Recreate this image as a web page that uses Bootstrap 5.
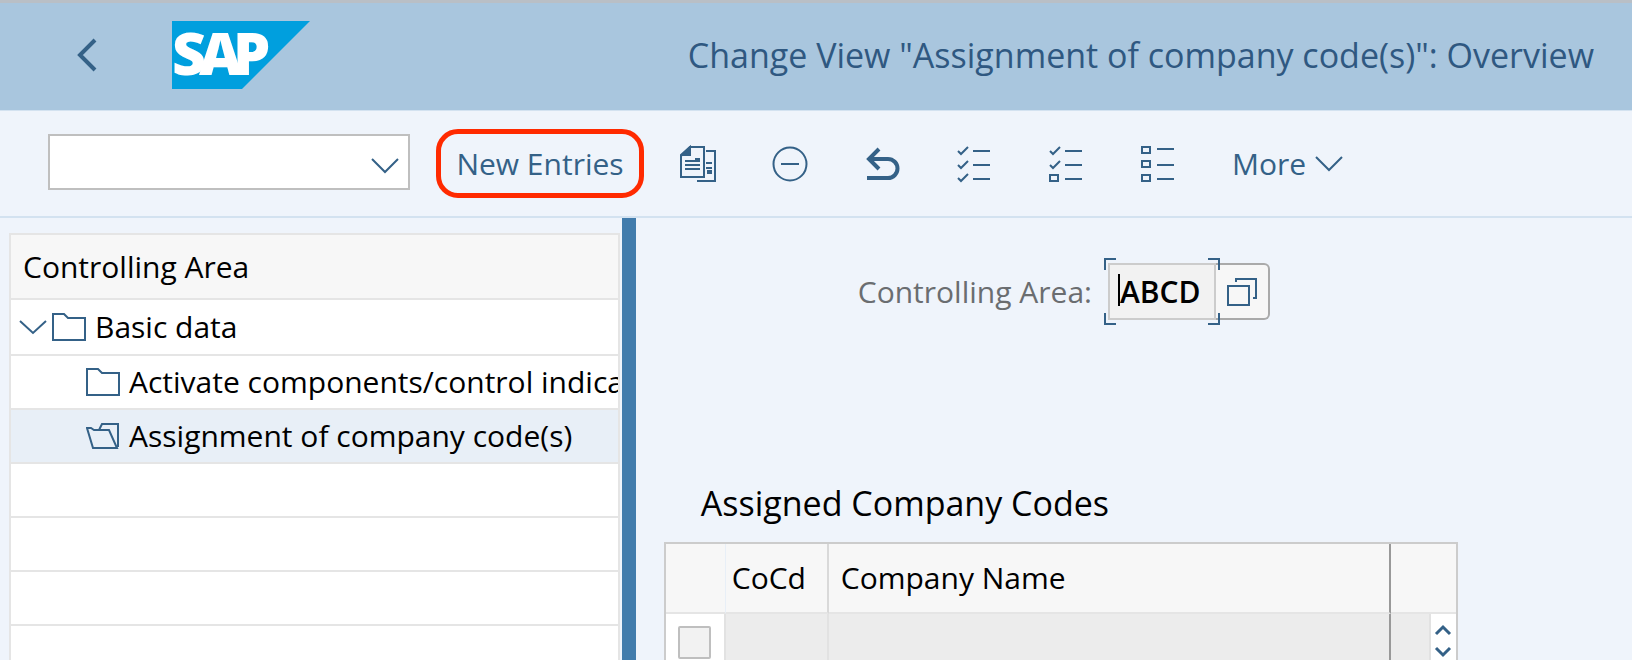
<!DOCTYPE html>
<html lang="en">
<head>
<meta charset="utf-8">
<meta name="viewport" content="width=device-width, initial-scale=1">
<title>Change View "Assignment of company code(s)": Overview</title>
<link href="https://cdn.jsdelivr.net/npm/bootstrap@5.3.0/dist/css/bootstrap.min.css" rel="stylesheet">
<style>
  :root { --ink: #346187; --accent: #427cac; --page: #eff4fb; --line: #e5e5e5; }
  body { font-family: "Open Sans", "Noto Sans", sans-serif; font-size: 30px; line-height: 40px; color: #000; background: var(--page); }
  svg { display: block; flex: none; }
  .ic { fill: none; stroke: var(--ink); stroke-width: 2; }
  .ic.mid { stroke-width: 3; }
  .ic.heavy { stroke-width: 4; }
  .plain-btn { background: none; border: 0; padding: 0; color: var(--ink); }
  .shell-bar { background: #a9c6de; border-top: 3px solid #b9bfc6; height: 110px; padding: 0 38px 4px 76px; }
  .shell-title { font-size: 34px; line-height: 40px; color: #2f5881; font-weight: 500; }
  .shell-home { margin-left: 74px; }
  .shell-logo { font-size: 59px; font-weight: 800; fill: #fff; }
  .tool-bar { height: 108px; border-top: 1px solid #d3e2f0; border-bottom: 2px solid #d3e2f0; padding: 0 48px; }
  .command-box { width: 362px; height: 56px; margin: 0 26px 4px 0; }
  .command-box select { appearance: none; background: #fff; border: 2px solid #bfbfbf; }
  .command-box svg { right: 10px; top: 22px; pointer-events: none; }
  .marked { border: 5px solid #ff2a00; border-radius: 22px; height: 69px; width: 208px; }
  .tools { gap: 56px; margin-left: 36px; }
  .side { width: 38.1%; padding: 15px 2px 0 9px; }
  .tree { background: #fff; border: 2px solid var(--line); border-bottom: 0; }
  .tree-head { height: 65px; background: #f7f7f7; border-bottom: 2px solid var(--line); padding-left: 12px; }
  .tree-row { height: 54px; border-bottom: 2px solid var(--line); gap: 9px; padding-left: 75px; white-space: nowrap; overflow: hidden; font-weight: 500; }
  .tree-row.root { height: 56px; padding-left: 8px; }
  .tree-row.root button { margin-right: -4px; }
  .tree-row.chosen { background: #e8eff7; }
  .splitter { width: 14px; background: var(--accent); }
  .work { padding: 45px 0 0 28px; min-width: 0; }
  .field-row { padding-left: 194px; height: 57px; gap: 16px; }
  .field-row label { color: #6a6d70; }
  .key-field { width: 108px; }
  .key-field input { width: 108px; height: 57px; padding: 0 0 0 10px; background: #f2f2f2; border: 2px solid #ccc; border-radius: 0; font-weight: 600; color: #000; }
  .focus-frame { left: -4px; top: -5px; pointer-events: none; }
  .help-btn { width: 54px; height: 57px; background: #f7f7f7; border: 2px solid #aaa; border-left: 0; border-radius: 0 6px 6px 0; }
  .grid-title { font-size: 34px; line-height: 40px; font-weight: 500; margin: 163px 0 19px 37px; }
  .grid { width: 82%; table-layout: fixed; border: 2px solid #ccc; border-collapse: separate; border-spacing: 0; background: #f7f7f7; }
  .grid th { height: 70px; font-weight: 500; padding: 0 0 0 6px; border-bottom: 2px solid var(--line); border-right: 2px solid #d9d9d9; }
  .grid th.name { padding-left: 12px; }
  .grid td { height: 56px; padding: 0; background: #ececec; border-right: 2px solid #e2e2e2; }
  .grid th.pick { border-right: 1px solid #e8eff7; }
  .grid td.pick { background: #fff; }
  .grid .edge { border-right: 2px solid #999; }
  .grid th.last, .grid td.last { border-right: 0; }
  .grid td.last { background: #fff; }
  .grid input { appearance: none; display: block; width: 33px; height: 33px; margin: 0 0 0 12px; background: #f2f2f2; border: 2px solid #bfbfbf; border-radius: 2px; }
  .grid .w-pick { width: 60px; }
  .grid .w-code { width: 103px; }
  .grid .w-gap { width: 40px; }
  .grid .w-scroll { width: 25px; }
</style>
</head>
<body class="vh-100 overflow-hidden d-flex flex-column">

<header class="shell-bar d-flex align-items-center flex-shrink-0">
  <button class="plain-btn" type="button" aria-label="Back">
    <svg width="22" height="36" viewBox="0 0 22 36" class="ic heavy"><path d="M19 3 4 18 19 33"/></svg>
  </button>
  <a href="#" class="shell-home text-decoration-none" aria-label="SAP home">
    <svg width="138" height="68" viewBox="0 0 138 68"><path d="M0 0H138L70 68H0Z" fill="#009fde"/><text class="shell-logo" x="0 27 61" y="54">SAP</text></svg>
  </a>
  <h1 class="shell-title mb-0 ms-auto">Change View "Assignment of company code(s)": Overview</h1>
</header>

<nav class="tool-bar d-flex align-items-center flex-shrink-0" aria-label="Functions">
  <div class="command-box position-relative">
    <select class="w-100 h-100" aria-label="Command"><option></option></select>
    <svg class="ic position-absolute" width="30" height="18" viewBox="0 0 30 18"><path d="M2 3 15 16 28 3"/></svg>
  </div>
  <button type="button" class="plain-btn marked">New Entries</button>
  <div class="tools d-flex align-items-center">
    <button type="button" class="plain-btn" aria-label="Copy as">
      <svg class="ic" width="36" height="38" viewBox="0 0 36 38"><path d="M10 2H24V32H1V11Z"/><path d="M10 2V10H1Z" fill="#346187"/><path d="M26 6H35V36H17M5 16H15M5 20H20M5 24H20M26 18H32M26 23H32"/><path d="M15 15H20M27 27H32" stroke-width="4"/></svg>
    </button>
    <button type="button" class="plain-btn" aria-label="Delete">
      <svg class="ic" width="36" height="38" viewBox="0 0 36 38"><circle cx="18" cy="19" r="16.5"/><path d="M9 19H27"/></svg>
    </button>
    <button type="button" class="plain-btn" aria-label="Undo change">
      <svg class="ic heavy" width="36" height="38" viewBox="0 0 36 38"><path d="M15 4 5 14 15 24M5 14H24A9 9 0 0 1 24 33H3"/></svg>
    </button>
    <button type="button" class="plain-btn" aria-label="Select all">
      <svg class="ic" width="36" height="38" viewBox="0 0 36 38"><path d="M2 6 5 9 12 2M2 20 5 23 12 16M2 33 5 36 12 29M17 6H34M17 20H34M17 34H34"/></svg>
    </button>
    <button type="button" class="plain-btn" aria-label="Select block">
      <svg class="ic" width="36" height="38" viewBox="0 0 36 38"><path d="M2 6 5 9 12 2M2 20 5 23 12 16M17 6H34M17 20H34M17 34H34M2 30H10V36H2Z"/></svg>
    </button>
    <button type="button" class="plain-btn" aria-label="Deselect all">
      <svg class="ic" width="36" height="38" viewBox="0 0 36 38"><path d="M2 2H10V8H2ZM2 16H10V22H2ZM2 30H10V36H2ZM17 4H34M17 20H34M17 34H34"/></svg>
    </button>
    <button type="button" class="plain-btn d-flex align-items-center gap-2">More
      <svg class="ic" width="30" height="18" viewBox="0 0 30 18"><path d="M2 2 15 15 28 2"/></svg>
    </button>
  </div>
</nav>

<main class="d-flex flex-grow-1 overflow-hidden">
  <aside class="side flex-shrink-0">
    <div class="tree">
      <div class="tree-head d-flex align-items-center">Controlling Area</div>
      <ul class="list-unstyled mb-0">
        <li class="tree-row root d-flex align-items-center">
          <button type="button" class="plain-btn" aria-label="Collapse"><svg class="ic" width="28" height="18" viewBox="0 0 28 18"><path d="M1 3 14 15 27 3"/></svg></button>
          <svg class="ic" width="34" height="28" viewBox="0 0 34 28"><path d="M1 1H12L16 5H33V27H1Z"/></svg>
          <span>Basic data</span>
        </li>
        <li class="tree-row d-flex align-items-center">
          <svg class="ic" width="34" height="28" viewBox="0 0 34 28"><path d="M1 1H12L16 5H33V27H1Z"/></svg>
          <span>Activate components/control indicators</span>
        </li>
        <li class="tree-row chosen d-flex align-items-center">
          <svg class="ic" width="34" height="28" viewBox="0 0 34 28"><path d="M1 6H5L8 8H23L31 26H7ZM13 8 16 2H32V25"/></svg>
          <span>Assignment of company code(s)</span>
        </li>
        <li class="tree-row"></li>
        <li class="tree-row"></li>
        <li class="tree-row"></li>
        <li class="tree-row"></li>
      </ul>
    </div>
  </aside>
  <div class="splitter flex-shrink-0" role="separator" aria-orientation="vertical"></div>

  <section class="work flex-grow-1">
    <div class="field-row d-flex align-items-center">
      <label for="area">Controlling Area:</label>
      <div class="d-flex">
        <div class="key-field position-relative">
          <input id="area" type="text" value="ABCD">
          <svg class="focus-frame ic position-absolute" width="116" height="67" viewBox="0 0 116 67"><path d="M1 12V1H12M104 1H115V12M115 55V66H104M12 66H1V55"/><path d="M15 16V48" stroke="#000"/></svg>
        </div>
        <button type="button" class="help-btn p-0 d-flex align-items-center justify-content-center" aria-label="Value help">
          <svg class="ic" width="30" height="30" viewBox="0 0 30 30"><path d="M1 9H22V28H1ZM9 5V2H29V21H26"/></svg>
        </button>
      </div>
    </div>

    <h2 class="grid-title">Assigned Company Codes</h2>
    <table class="grid">
      <colgroup><col class="w-pick"><col class="w-code"><col><col class="w-gap"><col class="w-scroll"></colgroup>
      <thead>
        <tr><th class="pick" aria-label="Select"></th><th>CoCd</th><th class="name edge">Company Name</th><th class="last" colspan="2"></th></tr>
      </thead>
      <tbody>
        <tr>
          <td class="pick"><input type="checkbox" aria-label="Select row"></td><td></td><td class="edge"></td><td></td>
          <td class="last">
            <div class="d-flex flex-column align-items-center gap-2">
              <button type="button" class="plain-btn" aria-label="Scroll up"><svg class="ic mid" width="18" height="14" viewBox="0 0 18 14"><path d="M2 10 9 3 16 10"/></svg></button>
              <button type="button" class="plain-btn" aria-label="Scroll down"><svg class="ic mid" width="18" height="14" viewBox="0 0 18 14"><path d="M2 2 9 9 16 2"/></svg></button>
            </div>
          </td>
        </tr>
      </tbody>
    </table>
  </section>
</main>
<script src="https://cdn.jsdelivr.net/npm/bootstrap@5.3.0/dist/js/bootstrap.bundle.min.js"></script>
</body>
</html>
